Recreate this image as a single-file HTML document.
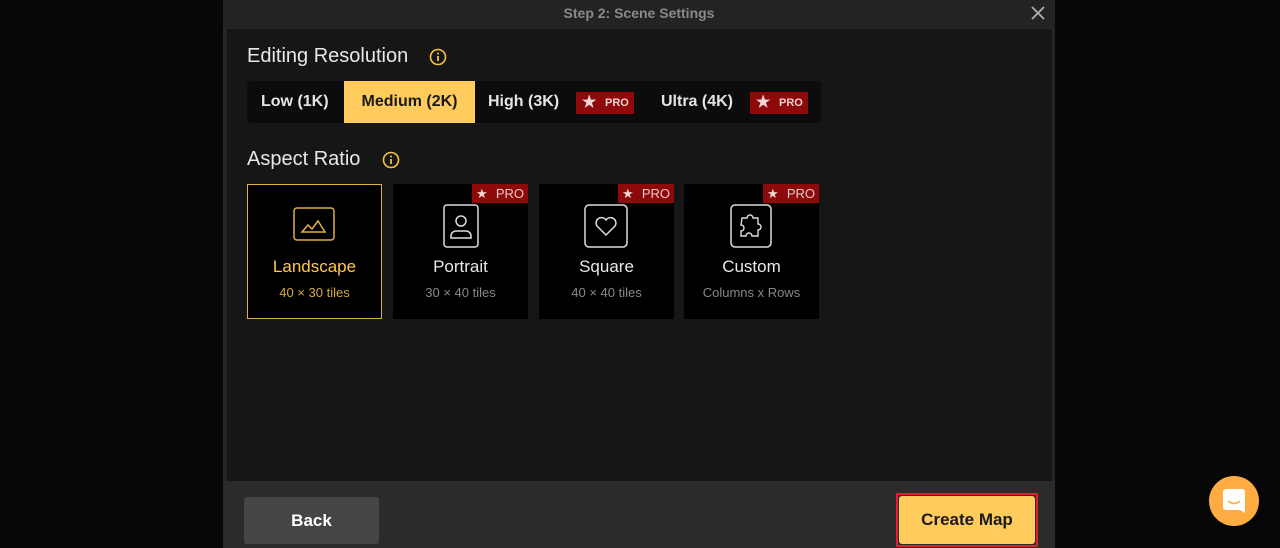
<!DOCTYPE html>
<html><head><meta charset="utf-8"><style>
*{margin:0;padding:0;box-sizing:border-box}
body{width:1280px;height:548px;background:#070707;font-family:"Liberation Sans",sans-serif;position:relative;overflow:hidden}
.modal{position:absolute;left:223px;top:0;width:832px;height:548px;background:#262626}
.hdr{position:absolute;left:0;top:0;width:832px;height:28px;background:#232323;color:#8a8a8a;font-weight:bold;font-size:14px;text-align:center;line-height:27px}
.x{position:absolute;right:9px;top:5px}
.body{position:absolute;left:4px;top:29px;width:825px;height:452px;background:#161616}
.foot{position:absolute;left:0;top:481px;width:832px;height:67px;background:#2b2b2b}
.h{position:absolute;color:#e8e8e8;font-size:20px}
.seg{position:absolute;left:20px;top:52px;width:574px;height:42px;background:#0c0c0c;border-radius:3px}
.seg span{position:absolute;top:0;height:42px;line-height:42px;font-size:16px;font-weight:bold;color:#e5e5e5}
.pro{position:absolute;background:#8e0a0a;color:#f2d0d0;font-size:11px;font-weight:bold;height:22px;line-height:22px;padding-left:29px;width:58px}
.pro:before{content:"★";position:absolute;left:6px;color:#f4d8d8;font-size:16px}
.card{position:absolute;top:155px;width:135px;height:135px;background:#000;text-align:center}
.card .t{position:absolute;top:73px;width:100%;font-size:17px;color:#e8e8e8}
.card .s{position:absolute;top:101px;width:100%;font-size:13px;color:#888}
.card svg{position:absolute;left:46px;top:23px}
.cp{position:absolute;right:0;top:0;width:56px;height:19px;background:#8e0a0a;color:#e8c8c8;font-size:13px;line-height:19px;text-align:right;padding-right:4px}
.cp:before{content:"★";position:absolute;left:4px;color:#f4d8d8;font-size:13px}
.btn{position:absolute;border-radius:3px;font-weight:bold;font-size:17px;text-align:center}
</style></head><body>
<div class="modal">
<div class="hdr">Step 2: Scene Settings
<svg class="x" width="16" height="16" viewBox="0 0 16 16"><path d="M2 2L14 14M14 2L2 14" stroke="#b0b0b0" stroke-width="1.8"/></svg></div>
<div class="body">
<div class="h" style="left:20px;top:16px">Editing Resolution</div>
<svg style="position:absolute;left:202px;top:19px" width="18" height="18" viewBox="0 0 18 18"><circle cx="9" cy="9" r="7.5" fill="none" stroke="#f5c542" stroke-width="1.6"/><path d="M9 8v5" stroke="#f5c542" stroke-width="1.8"/><circle cx="9" cy="5.5" r="1" fill="#f5c542"/></svg>
<div class="seg">
<span style="left:14px">Low (1K)</span>
<span style="left:97px;width:131px;background:#ffcb5c;color:#1a1a1a;text-align:center">Medium (2K)</span>
<span style="left:241px">High (3K)</span>
<div class="pro" style="left:329px;top:11px">PRO</div>
<span style="left:414px">Ultra (4K)</span>
<div class="pro" style="left:503px;top:11px">PRO</div>
</div>
<div class="h" style="left:20px;top:119px">Aspect Ratio</div>
<svg style="position:absolute;left:155px;top:122px" width="18" height="18" viewBox="0 0 18 18"><circle cx="9" cy="9" r="7.5" fill="none" stroke="#f5c542" stroke-width="1.6"/><path d="M9 8v5" stroke="#f5c542" stroke-width="1.8"/><circle cx="9" cy="5.5" r="1" fill="#f5c542"/></svg>
<div class="card" style="left:20px;border:1px solid #e0b040">
<svg width="42" height="34" viewBox="0 0 42 34" style="left:45px;top:22px"><rect x="1" y="1" width="40" height="32" rx="3" fill="none" stroke="#e0b040" stroke-width="1.5"/><path d="M9 25L15 18L19 22L25 14L32 25Z" fill="none" stroke="#e0b040" stroke-width="1.5"/></svg>
<div class="t" style="color:#ffc94a;top:72px">Landscape</div><div class="s" style="color:#d9a93c;top:100px">40 × 30 tiles</div></div>
<div class="card" style="left:166px"><div class="cp">PRO</div>
<svg width="36" height="44" viewBox="0 0 36 44" style="left:50px;top:20px"><rect x="1" y="1" width="34" height="42" rx="3" fill="none" stroke="#ddd" stroke-width="1.5"/><circle cx="18" cy="17" r="5" fill="none" stroke="#ddd" stroke-width="1.5"/><path d="M8 34v-2a5 5 0 0 1 5-5h10a5 5 0 0 1 5 5v2Z" fill="none" stroke="#ddd" stroke-width="1.5"/></svg>
<div class="t">Portrait</div><div class="s">30 × 40 tiles</div></div>
<div class="card" style="left:312px"><div class="cp">PRO</div>
<svg width="44" height="44" viewBox="0 0 44 44" style="left:45px;top:20px"><rect x="1" y="1" width="42" height="42" rx="4" fill="none" stroke="#ddd" stroke-width="1.5"/><path d="M22 31L13 22a5 5 0 0 1 9-6a5 5 0 0 1 9 6Z" fill="none" stroke="#ddd" stroke-width="1.5"/></svg>
<div class="t">Square</div><div class="s">40 × 40 tiles</div></div>
<div class="card" style="left:457px"><div class="cp">PRO</div>
<svg width="42" height="44" viewBox="0 0 42 44" style="left:46px;top:20px"><rect x="1" y="1" width="40" height="42" rx="4" fill="none" stroke="#ddd" stroke-width="1.5"/><path d="M12 14h5a3 3 0 1 1 6 0h5v6a3 3 0 1 1 0 6v6h-6a3 3 0 1 0-6 0h-5v-5a3 3 0 1 0 0-6Z" fill="none" stroke="#ddd" stroke-width="1.4"/></svg>
<div class="t">Custom</div><div class="s">Columns x Rows</div></div>
</div>
<div class="foot">
<div class="btn" style="left:21px;top:16px;width:135px;height:47px;line-height:47px;background:#454545;color:#fff">Back</div>
<div style="position:absolute;left:673px;top:12px;width:142px;height:54px;border:2px solid #e0202a"></div>
<div class="btn" style="left:676px;top:15px;width:136px;height:48px;line-height:48px;background:#ffcb5c;color:#1a1a1a">Create Map</div>
</div>
</div>
<div style="position:absolute;left:1209px;top:476px;width:50px;height:50px;border-radius:50%;background:#ffad42">
<svg style="position:absolute;left:14px;top:13px" width="22" height="24" viewBox="0 0 22 24"><path d="M3 0h16a3 3 0 0 1 3 3v21l-5-3H3a3 3 0 0 1-3-3V3a3 3 0 0 1 3-3Z" fill="#fff"/><path d="M5 12q6 5 12 0" fill="none" stroke="#ffad42" stroke-width="1.6"/></svg></div>
</body></html>
